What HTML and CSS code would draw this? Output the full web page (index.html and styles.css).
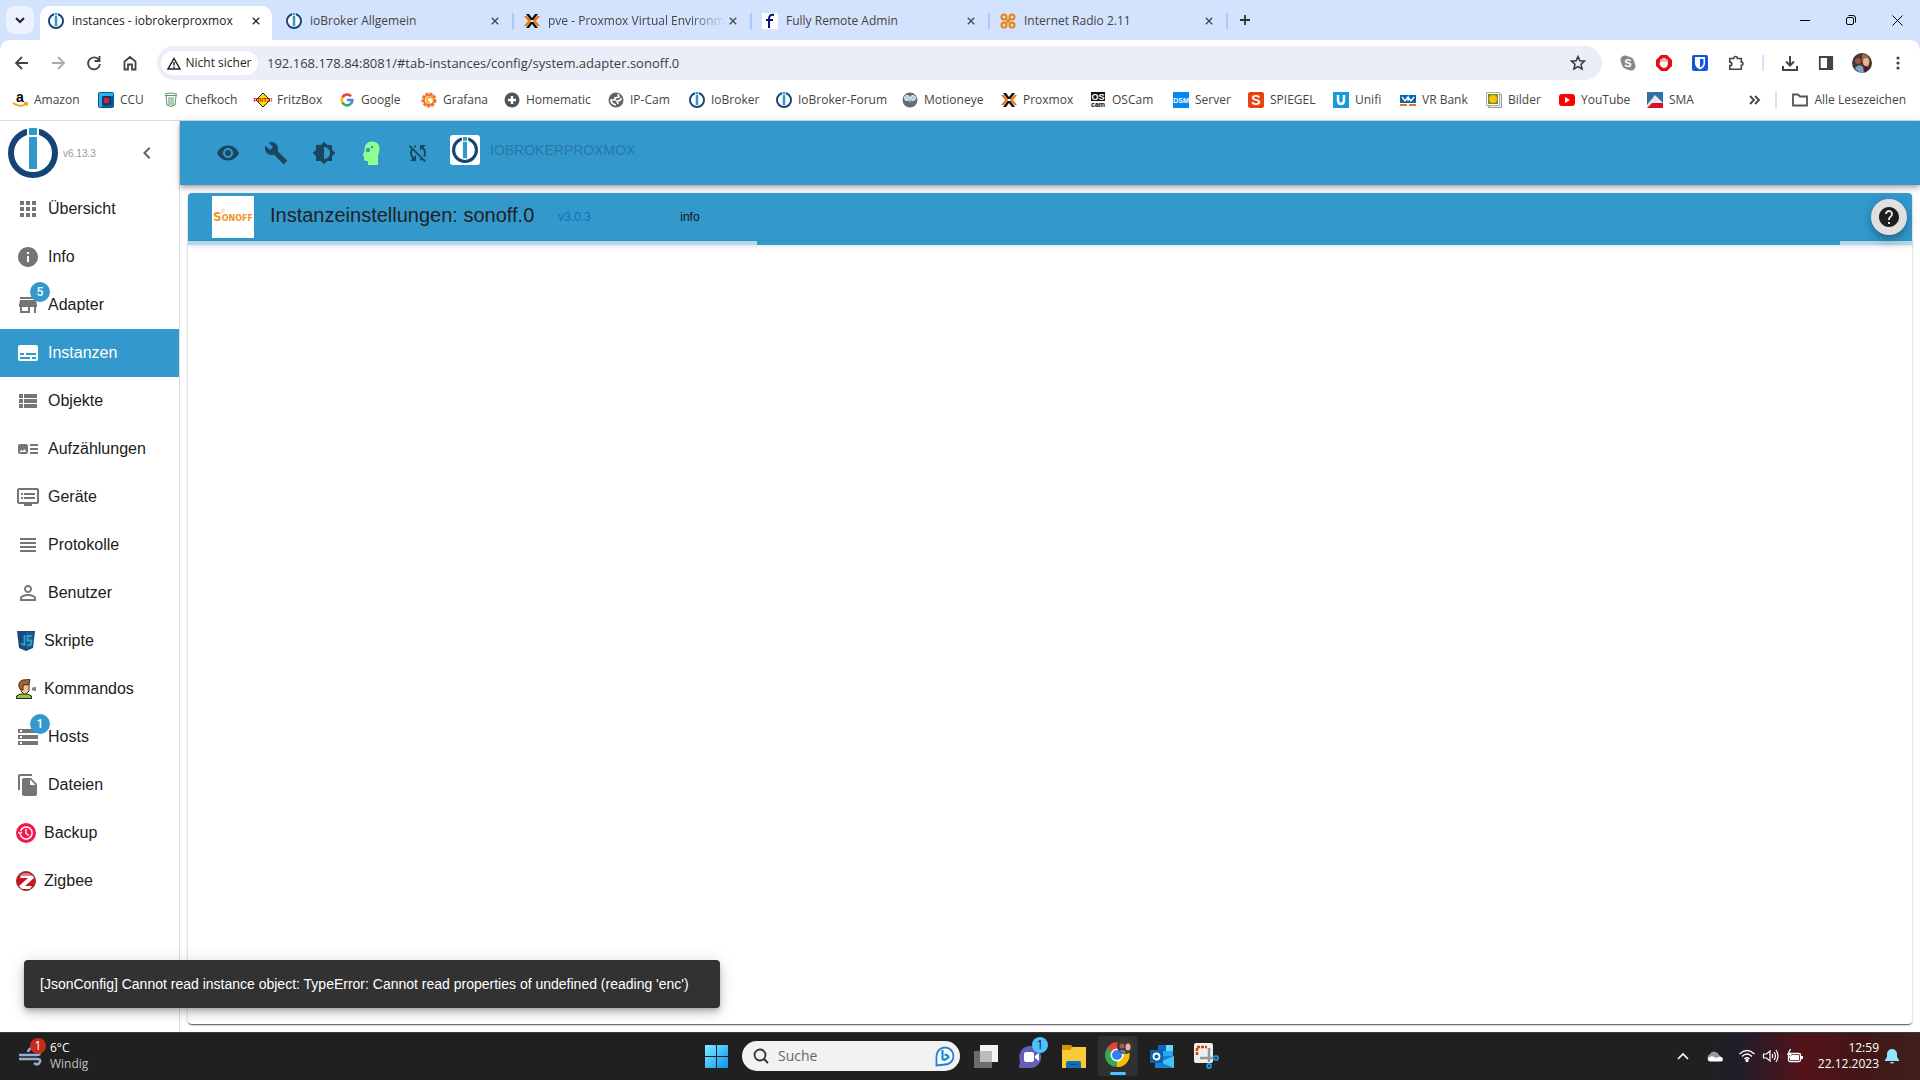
FILE: index.html
```html
<!DOCTYPE html>
<html lang="de">
<head>
<meta charset="utf-8">
<title>instances - iobrokerproxmox</title>
<link rel="stylesheet" href="styles.css">
</head>
<body>
<svg class="defs" aria-hidden="true">
  <symbol id="iob" viewBox="0 0 50 50"><circle cx="25" cy="25" r="22" fill="#fff" stroke="#164477" stroke-width="6"/><path d="M19 0h12v10H19z" fill="#fff"/><path d="M21 0h8v7h-8zM21 9h8v32h-8z" fill="#3399cc"/></symbol>
  <symbol id="prox" viewBox="0 0 16 16"><path d="M2 1h3l3 4 3-4h3l-4.500 6h-3zM2 15h3l3-4 3 4h3L9.500 9h-3z" fill="#111"/><path d="M0 3h3l4 5-4 5H0l4-5zM16 3h-3L9 8l4 5h3l-4-5z" fill="#ee7a0a"/></symbol>
  <symbol id="x" viewBox="0 0 10 10"><path d="M1 1l8 8M9 1L1 9" stroke="currentColor" stroke-width="1.600" fill="none"/></symbol>
</svg>

<header class="browser">
  <div class="tabs">
    <button class="tab-search" aria-label="Tabs durchsuchen"><svg width="10" height="10" viewBox="0 0 10 10"><path d="M1 3l4 4 4-4" fill="none" stroke="#222" stroke-width="2"/></svg></button>
    <div class="tab active"><svg class="fav"><use href="#iob"/></svg><span class="tab-title">instances - iobrokerproxmox</span><button class="close" aria-label="Schließen"><svg><use href="#x"/></svg></button></div>
    <div class="tab"><svg class="fav"><use href="#iob"/></svg><span class="tab-title">ioBroker Allgemein</span><button class="close" aria-label="Schließen"><svg><use href="#x"/></svg></button></div>
    <div class="tab"><svg class="fav"><use href="#prox"/></svg><span class="tab-title fade">pve - Proxmox Virtual Environm</span><button class="close" aria-label="Schließen"><svg><use href="#x"/></svg></button></div>
    <div class="tab"><svg class="fav" viewBox="0 0 16 16"><path d="M0 0h16v16H0z" fill="#fff"/><path d="M12 2q-5-1-5 4v9M4 7h7" fill="none" stroke="#100a80" stroke-width="2"/></svg><span class="tab-title">Fully Remote Admin</span><button class="close" aria-label="Schließen"><svg><use href="#x"/></svg></button></div>
    <div class="tab"><svg class="fav" viewBox="0 0 16 16" fill="none" stroke="#ee800f" stroke-width="2"><circle cx="4" cy="4" r="2.500"/><circle cx="12" cy="4" r="2.500"/><circle cx="4" cy="12" r="2.500"/><circle cx="12" cy="12" r="2.500"/><path d="M6 10l4-4M6 6l1 1M9 9l1 1"/></svg><span class="tab-title">Internet Radio 2.11</span><button class="close" aria-label="Schließen"><svg><use href="#x"/></svg></button></div>
    <button class="new-tab" aria-label="Neuer Tab"><svg width="12" height="12" viewBox="0 0 12 12"><path d="M6 1v10M1 6h10" stroke="#333" stroke-width="1.800"/></svg></button>
    <div class="window-buttons">
      <button aria-label="Minimieren"><svg width="10" height="10"><path d="M0 5.500h10" stroke="#000"/></svg></button>
      <button aria-label="Wiederherstellen"><svg width="10" height="10" fill="none" stroke="#000"><rect x=".5" y="2.500" width="7" height="7" rx="1.500"/><path d="M2.500 .5H7q2.500 0 2.500 2.500v4.500"/></svg></button>
      <button aria-label="Schließen"><svg width="11" height="11"><path d="M.5 .5l10 10M10.500 .5l-10 10" stroke="#000"/></svg></button>
    </div>
  </div>

  <div class="toolbar">
    <div class="nav-buttons">
      <button aria-label="Zurück"><svg viewBox="0 0 16 16"><path d="M8 2L2 8l6 6M2 8h12"/></svg></button>
      <button class="disabled" aria-label="Vor"><svg viewBox="0 0 16 16"><path d="M8 2l6 6-6 6M14 8H2"/></svg></button>
      <button aria-label="Neu laden"><svg viewBox="0 0 16 16"><path d="M13 5A6 6 0 1 0 14 9M13.500 1v5h-5"/></svg></button>
      <button aria-label="Startseite"><svg viewBox="0 0 16 16"><path d="M2.500 14.500V6.500L8 2l5.500 4.500v8H10v-5H6v5z"/></svg></button>
    </div>
    <div class="omnibox">
      <button class="insecure"><svg width="14" height="13" viewBox="0 0 14 13"><path d="M7 1.500L13 12H1zM7 5v3.500M7 9.500V11" fill="none" stroke="#222" stroke-width="1.500"/></svg>Nicht sicher</button>
      <input type="text" aria-label="Adresse" value="192.168.178.84:8081/#tab-instances/config/system.adapter.sonoff.0">
      <button aria-label="Lesezeichen"><svg width="16" height="16" viewBox="0 0 16 16"><path d="M8 1.500l1.900 4.300 4.600.4-3.500 3.100 1.100 4.600L8 11.500l-4.100 2.400L5 9.300 1.500 6.200l4.600-.4z" fill="none" stroke="#333" stroke-width="1.500"/></svg></button>
    </div>
    <div class="extensions">
      <button aria-label="Skype"><svg viewBox="0 0 16 16"><circle cx="5" cy="5" r="4.500" fill="#888"/><circle cx="11" cy="11" r="4.500" fill="#888"/><circle cx="8" cy="8" r="6.500" fill="#888"/><text x="8" y="12" text-anchor="middle" class="glyph white" font-size="11">S</text></svg></button>
      <button aria-label="AdBlock"><svg viewBox="0 0 16 16"><path d="M5 0h6l5 5v6l-5 5H5l-5-5V5z" fill="#e60c12"/><path d="M5 7V5M7 7V3.500M9 7V3.500M11 8V5" stroke="#fff" stroke-width="1.400" stroke-linecap="round"/><path d="M4.300 7h7.400v3q-1 3-3.700 3-2.500 0-4.700-4z" fill="#fff"/></svg></button>
      <button aria-label="Bitwarden"><svg viewBox="0 0 16 16"><rect width="16" height="16" rx="2" fill="#1358dc"/><path d="M3 2h10v7q-1 4-5 5.500Q4 13 3 9z" fill="#fff"/><path d="M8 4h3.500v5Q11 11 8 12.500z" fill="#1358dc"/></svg></button>
      <button aria-label="Erweiterungen"><svg viewBox="0 0 18 18"><path d="M2 4h4.500c0-3 4-3 4 0H15v4c2.500 0 2.500 3.500 0 3.500V16H2v-4c3 0 3-4 0-4z" fill="none" stroke="#444" stroke-width="1.800"/></svg></button>
      <i class="divider"></i>
      <button aria-label="Downloads"><svg viewBox="0 0 16 16"><path d="M8 1v9M4 6.500l4 4 4-4M1 11v4h14v-4" fill="none" stroke="#444" stroke-width="2"/></svg></button>
      <button aria-label="Seitenleiste"><svg viewBox="0 0 16 16"><path d="M1.800 2h12.400v12H1.800z" fill="none" stroke="#444" stroke-width="1.800"/><path d="M9 2h5.500v12H9z" fill="#444"/></svg></button>
      <button aria-label="Profil"><svg class="avatar" viewBox="0 0 20 20"><circle cx="10" cy="10" r="10" fill="#45382f"/><path d="M10 1q7 0 8 7l-2 7-6-6z" fill="#a66548"/><circle cx="6" cy="8" r="3" fill="#a05340"/><ellipse cx="14" cy="9" rx="3" ry="4" fill="#e8b39b"/><path d="M3 15q4-5 8-1l1 6q-6 0-9-5" fill="#7fa3c4"/><path d="M12 14l6 0-5 6z" fill="#4b1828"/></svg></button>
      <button aria-label="Menü"><svg viewBox="0 0 16 16" fill="#444"><circle cx="8" cy="3" r="1.600"/><circle cx="8" cy="8" r="1.600"/><circle cx="8" cy="13" r="1.600"/></svg></button>
    </div>
  </div>

  <nav class="bookmarks">
    <div class="bookmark-list">
      <a href="#"><svg viewBox="0 0 16 16"><text x="8" y="10" text-anchor="middle" class="glyph" font-size="14">a</text><path d="M1 11q7 5 13 1M12 11h3v3" fill="none" stroke="#f6a21c" stroke-width="1.800"/></svg>Amazon</a>
      <a href="#"><svg viewBox="0 0 16 16"><rect width="16" height="16" rx="2" fill="#075b96"/><path d="M1 1h14v3H4v11H1z" fill="#22b5e5"/><rect x="4" y="4" width="9" height="9" rx="2" fill="#0c3766"/><circle cx="8.500" cy="8.500" r="3" fill="#d0203d"/></svg>CCU</a>
      <a href="#"><svg viewBox="0 0 16 16" fill="none" stroke="#5b9468"><path d="M2 3.500h12M3 4l1 9q4 3 8 0l1-9M6 5v8M8 5v8M10 5v8M2 2q6-2 12 0"/></svg>Chefkoch</a>
      <a href="#"><svg viewBox="0 0 16 16"><path d="M8 1l7 7-7 7-7-7z" fill="#ffdf00" stroke="#222"/><text x="8" y="10" text-anchor="middle" class="glyph" font-size="6" fill="#d00a12">FRITZ!</text></svg>FritzBox</a>
      <a href="#"><svg viewBox="0 0 16 16" fill="none" stroke-width="2.600"><path d="M12 4.300A5.300 5.300 0 0 0 3.400 5.400" stroke="#ea4335"/><path d="M3.400 5.400a5.300 5.300 0 0 0 0 5.200" stroke="#fbbc05"/><path d="M3.400 10.600a5.300 5.300 0 0 0 8.100 1.500" stroke="#34a853"/><path d="M11.500 12.100A5.300 5.300 0 0 0 13.300 8H8" stroke="#4285f4"/></svg>Google</a>
      <a href="#"><svg viewBox="0 0 16 16" fill="none" stroke="#f2742b"><circle cx="8" cy="8" r="6" stroke-width="3" stroke-dasharray="3 1"/><circle cx="8" cy="8" r="5" stroke-width="2"/><path d="M12 8a3 3 0 1 0-3 3" stroke="#f8ab32" stroke-width="2"/></svg>Grafana</a>
      <a href="#"><svg viewBox="0 0 16 16"><circle cx="8" cy="8" r="7.500" fill="#505357"/><path d="M8 4v8M4 8h8" stroke="#fff" stroke-width="2.400"/></svg>Homematic</a>
      <a href="#"><svg viewBox="0 0 16 16"><circle cx="8" cy="8" r="7.500" fill="#5f6368"/><path d="M10 2l1 3-4 1v2H3q0 4 5 5M13 6q0 3-4 3l1 3" fill="none" stroke="#fff" stroke-width="1.700"/></svg>IP-Cam</a>
      <a href="#"><svg><use href="#iob"/></svg>IoBroker</a>
      <a href="#"><svg><use href="#iob"/></svg>IoBroker-Forum</a>
      <a href="#"><svg viewBox="0 0 16 16"><circle cx="8" cy="8" r="7.500" fill="#666c72"/><circle cx="5" cy="6" r="2.500" fill="#9ed6ed" stroke="#eee"/><circle cx="11" cy="6" r="2.500" fill="#9ed6ed" stroke="#eee"/><path d="M7 8h2l-1 3z" fill="#ddd"/></svg>Motioneye</a>
      <a href="#"><svg><use href="#prox"/></svg>Proxmox</a>
      <a href="#"><svg viewBox="0 0 16 16"><path d="M1 0h14v9H1z" fill="#111"/><text x="8" y="8" text-anchor="middle" class="glyph white" font-size="9">OS</text><text x="8" y="15" text-anchor="middle" class="glyph" font-size="7">cam</text></svg>OSCam</a>
      <a href="#"><svg viewBox="0 0 16 16"><path d="M0 0h16v16H0z" fill="#0787ea"/><text x="8" y="11" text-anchor="middle" class="glyph white" font-size="7">DSM</text></svg>Server</a>
      <a href="#"><svg viewBox="0 0 16 16"><rect width="16" height="16" rx="2" fill="#e64415"/><text x="8" y="13" text-anchor="middle" class="glyph white" font-size="14">S</text></svg>SPIEGEL</a>
      <a href="#"><svg viewBox="0 0 16 16"><path d="M0 0h16v16H0z" fill="#159bd8"/><path d="M5 3v5q0 4 3 4t3-4V3" fill="none" stroke="#fff" stroke-width="2.500"/></svg>Unifi</a>
      <a href="#"><svg viewBox="0 0 16 16"><path d="M0 3h16v8H0z" fill="#0867ae"/><path d="M2 5l3 4 3-4v4M8 5l3 4 3-4" fill="none" stroke="#fff" stroke-width="1.300"/><path d="M0 12h7v2H0zM9 12h7v2H9z" fill="#f07115"/></svg>VR Bank</a>
      <a href="#"><svg viewBox="0 0 16 16"><path d="M2.500 2.500h13v13h-13z" fill="#eee" stroke="#999"/><path d="M.5 .5h13v13H.5z" fill="#fff" stroke="#aaa"/><path d="M2 2h10v10H2z" fill="#7c8a20"/><circle cx="7" cy="7" r="4" fill="#f4c20c"/></svg>Bilder</a>
      <a href="#"><svg viewBox="0 0 16 16"><rect y="2" width="16" height="12" rx="3" fill="#f00"/><path d="M6 5l5 3-5 3z" fill="#fff"/></svg>YouTube</a>
      <a href="#"><svg viewBox="0 0 16 16"><path d="M0 0h16v16H0z" fill="#2d73a8"/><path d="M0 13l8-10 8 8v5H0z" fill="#e5e8ee"/><path d="M0 16l5-5 11 0v5z" fill="#d01426"/></svg>SMA</a>
    </div>
    <div class="bookmark-end">
      <button aria-label="Weitere Lesezeichen"><svg width="11" height="10" viewBox="0 0 11 10"><path d="M1 1l4 4-4 4M6 1l4 4-4 4" fill="none" stroke="#444" stroke-width="1.800"/></svg></button>
      <i class="divider"></i>
      <a href="#"><svg viewBox="0 0 16 16"><path d="M1 2.500h5l2 2h7v9H1z" fill="none" stroke="#555" stroke-width="1.800"/></svg>Alle Lesezeichen</a>
    </div>
  </nav>
</header>

<div class="app">
  <aside class="sidebar">
    <div class="brand"><svg class="brand-logo"><use href="#iob"/></svg><span>v6.13.3</span><button aria-label="Menü einklappen"><svg class="mi" viewBox="0 0 24 24"><path d="M15.410 7.410L14 6l-6 6 6 6 1.410-1.410L10.830 12z"/></svg></button></div>
    <nav class="menu">
      <a href="#"><span class="ico"><svg class="mi" viewBox="0 0 24 24"><path d="M4 8h4V4H4v4zm6 12h4v-4h-4v4zm-6 0h4v-4H4v4zm0-6h4v-4H4v4zm6 0h4v-4h-4v4zm6-10v4h4V4h-4zm-6 4h4V4h-4v4zm6 6h4v-4h-4v4zm0 6h4v-4h-4v4z"/></svg></span>Übersicht</a>
      <a href="#"><span class="ico"><svg class="mi" viewBox="0 0 24 24"><path d="M12 2C6.480 2 2 6.480 2 12s4.480 10 10 10 10-4.480 10-10S17.520 2 12 2zm1 15h-2v-6h2v6zm0-8h-2V7h2v2z"/></svg></span>Info</a>
      <a href="#"><span class="ico"><svg class="mi" viewBox="0 0 24 24"><path d="M20 4H4v2h16V4zm1 10v-2l-1-5H4l-1 5v2h1v6h10v-6h4v6h2v-6h1zm-9 4H6v-4h6v4z"/></svg><b class="badge">5</b></span>Adapter</a>
      <a href="#" class="selected"><span class="ico"><svg class="mi" viewBox="0 0 24 24"><path d="M20 4H4c-1.100 0-2 .9-2 2v12c0 1.100.9 2 2 2h16c1.100 0 2-.9 2-2V6c0-1.100-.9-2-2-2zM4 12h4v2H4v-2zm10 6H4v-2h10v2zm6 0h-4v-2h4v2zm0-4H10v-2h10v2z"/></svg></span>Instanzen</a>
      <a href="#"><span class="ico"><svg class="mi" viewBox="0 0 24 24"><path d="M3 14h4v-4H3v4zm0 5h4v-4H3v4zM3 9h4V5H3v4zm5 5h13v-4H8v4zm0 5h13v-4H8v4zM8 5v4h13V5H8z"/></svg></span>Objekte</a>
      <a href="#"><span class="ico"><svg class="mi" viewBox="0 0 24 24"><path d="M22 13h-8v-2h8v2zm0-6h-8v2h8V7zm-8 10h8v-2h-8v2zm-2-8v6c0 1.100-.9 2-2 2H4c-1.100 0-2-.9-2-2V9c0-1.100.9-2 2-2h6c1.100 0 2 .9 2 2zm-1.500 6l-2.250-3-1.750 2.260-1.250-1.510L3.500 15h7z"/></svg></span>Aufzählungen</a>
      <a href="#"><span class="ico"><svg class="mi" viewBox="0 0 24 24"><path d="M21 3H3c-1.100 0-2 .9-2 2v12c0 1.100.9 2 2 2h5v2h8v-2h5c1.100 0 2-.9 2-2V5c0-1.100-.9-2-2-2zm0 14H3V5h18v12zm-2-9H8v2h11V8zm0 4H8v2h11v-2zM7 8H5v2h2V8zm0 4H5v2h2v-2z"/></svg></span>Geräte</a>
      <a href="#"><span class="ico"><svg class="mi" viewBox="0 0 24 24"><path d="M4 15h16v-2H4v2zm0 4h16v-2H4v2zm0-8h16V9H4v2zm0-6v2h16V5H4z"/></svg></span>Protokolle</a>
      <a href="#"><span class="ico"><svg class="mi" viewBox="0 0 24 24"><path d="M12 5.900c1.160 0 2.100.94 2.100 2.100s-.94 2.100-2.100 2.100S9.900 9.160 9.900 8s.94-2.100 2.100-2.100m0 9c2.970 0 6.100 1.460 6.100 2.100v1.100H5.900V17c0-.64 3.130-2.100 6.100-2.100M12 4C9.790 4 8 5.790 8 8s1.790 4 4 4 4-1.790 4-4-1.790-4-4-4zm0 9c-2.670 0-8 1.340-8 4v3h16v-3c0-2.660-5.330-4-8-4z"/></svg></span>Benutzer</a>
      <a href="#" class="plugin"><svg viewBox="0 0 20 20"><path d="M1 0h18l-2 17-7 3-7-3z" fill="#184a7c"/><path d="M10 1h7.500L16 16l-6 2z" fill="#1c5a90"/><path d="M8.500 4v10l-3.500-1.500M15.500 5h-4v4.500h4l-.5 4-3.500 1" fill="none" stroke="#35a0d5" stroke-width="1.800"/></svg>Skripte</a>
      <a href="#" class="plugin"><svg viewBox="0 0 20 20"><path d="M.5 19.500V17l4-2h7l4 2v2.500z" fill="#93c83e" stroke="#222"/><path d="M5 5h8v7l-3 3H8l-3-3z" fill="#f3c398" stroke="#4a2d1c"/><path d="M3 8q-1-6 4-7l7-.5-1 5-6 .5v5l-3-1z" fill="#a66432" stroke="#4a2d1c"/><path d="M17 8.500v3M19 8v4" fill="none" stroke="#333" stroke-width="1.200"/></svg>Kommandos</a>
      <a href="#"><span class="ico"><svg class="mi" viewBox="0 0 24 24"><path d="M2 20h20v-4H2v4zm2-3h2v2H4v-2zM2 4v4h20V4H2zm4 3H4V5h2v2zm-4 7h20v-4H2v4zm2-3h2v2H4v-2z"/></svg><b class="badge">1</b></span>Hosts</a>
      <a href="#"><span class="ico"><svg class="mi" viewBox="0 0 24 24"><path d="M16 1H4c-1.100 0-2 .9-2 2v14h2V3h12V1zm-1 4l6 6v10c0 1.100-.9 2-2 2H8c-1.100 0-2-.9-2-2V7c0-1.100.9-2 2-2h7zm-1 7h5.500L14 6.500V12z"/></svg></span>Dateien</a>
      <a href="#" class="plugin"><svg viewBox="0 0 20 20"><circle cx="10" cy="10" r="10" fill="#f5164b"/><path d="M4.500 12a6 6 0 1 0 0-4M10 6v4.500l3 2M2.500 9l1.500 2 2-2" fill="none" stroke="#fff" stroke-width="1.400"/></svg>Backup</a>
      <a href="#" class="plugin"><svg viewBox="0 0 20 20"><circle cx="10" cy="10" r="9.500" fill="#c81420" stroke="#8c3434"/><path d="M3 5q7-6 14 0z" fill="#d98b88"/><path d="M5 5h12l1 2-9 8h7l-2 3H6l-3-3 9-8H4z" fill="#fff"/></svg>Zigbee</a>
    </nav>
  </aside>

  <main class="main">
    <div class="appbar">
      <button aria-label="Sichtbarkeit"><svg class="mi" viewBox="0 0 24 24"><path d="M12 4.500C7 4.500 2.730 7.610 1 12c1.730 4.390 6 7.500 11 7.500s9.270-3.110 11-7.500c-1.730-4.390-6-7.500-11-7.500zM12 17c-2.760 0-5-2.240-5-5s2.240-5 5-5 5 2.240 5 5-2.240 5-5 5zm0-8c-1.660 0-3 1.340-3 3s1.340 3 3 3 3-1.340 3-3-1.340-3-3-3z"/></svg></button>
      <button aria-label="Einstellungen"><svg class="mi" viewBox="0 0 24 24"><path d="M22.700 19l-9.100-9.100c.9-2.300.4-5-1.500-6.900-2-2-5-2.400-7.400-1.300L9 6 6 9 1.600 4.700C.4 7.100.9 10.100 2.900 12.100c1.900 1.900 4.600 2.400 6.900 1.500l9.100 9.100c.4.4 1 .4 1.400 0l2.300-2.300c.5-.4.5-1.100.1-1.400z"/></svg></button>
      <button aria-label="Farbschema"><svg class="mi" viewBox="0 0 24 24"><path d="M20 15.310L23.310 12 20 8.690V4h-4.690L12 .69 8.690 4H4v4.690L.69 12 4 15.310V20h4.690L12 23.310 15.310 20H20v-4.690zM12 18V6c3.310 0 6 2.690 6 6s-2.690 6-6 6z"/></svg></button>
      <button class="expert" aria-label="Expertenmodus"><svg class="mi" viewBox="0 0 24 24"><path d="M13 .5c5 0 7.500 3 7.500 7 0 3-1 5-1.500 7V24H9v-4H7c-2 0-2-1-2-3v-2H3.500l2-5C5.500 4 8 .5 13 .5z"/><g fill="#3399cc"><circle cx="9" cy="9" r="2.200"/><circle cx="13" cy="6" r="1.300"/></g></svg></button>
      <button aria-label="Synchronisierung aus"><svg class="mi" viewBox="0 0 24 24"><path d="M10 6.350V4.260c-.8.21-1.550.54-2.230.96l1.460 1.460c.25-.12.5-.24.77-.33zm-7.140-.94l2.360 2.360C4.450 8.990 4 10.440 4 12c0 2.210.91 4.200 2.360 5.640L4 20h6v-6l-2.240 2.240C6.680 15.150 6 13.660 6 12c0-1 .25-1.940.68-2.770l8.080 8.080c-.25.13-.5.25-.77.34v2.090c.8-.21 1.550-.54 2.230-.96l2.360 2.360 1.270-1.270L4.140 4.140 2.860 5.410zM20 4h-6v6l2.240-2.240C17.320 8.850 18 10.340 18 12c0 1-.25 1.940-.68 2.770l1.460 1.460C19.550 15.010 20 13.560 20 12c0-2.210-.91-4.200-2.360-5.640L20 4z"/></svg></button>
      <button class="host"><span class="host-logo"><svg><use href="#iob"/></svg></span>IOBROKERPROXMOX</button>
    </div>

    <section class="panel">
      <header class="panel-head">
        <div class="sonoff"><svg width="42" height="42" viewBox="0 0 42 42"><text x="21" y="25" text-anchor="middle" class="glyph wide" font-size="12" fill="#f39325">S<tspan font-size="8">ONOFF</tspan></text><path d="M9 15a2 2 0 0 1 2 2M10 13q2 0 2 2" fill="none" stroke="#f7c691"/></svg></div>
        <h1>Instanzeinstellungen: sonoff.0</h1>
        <span class="version">v3.0.3</span>
        <span class="level">info</span>
        <button class="help" aria-label="Hilfe"><svg class="mi" viewBox="0 0 24 24"><path d="M12 2C6.480 2 2 6.480 2 12s4.480 10 10 10 10-4.480 10-10S17.520 2 12 2zm1 17h-2v-2h2v2zm2.070-7.750l-.9.920C13.450 12.900 13 13.500 13 15h-2v-.5c0-1.100.45-2.100 1.170-2.830l1.240-1.260c.37-.36.59-.86.59-1.410 0-1.100-.9-2-2-2s-2 .9-2 2H8c0-2.210 1.790-4 4-4s4 1.790 4 4c0 .88-.36 1.680-.93 2.250z"/></svg></button>
      </header>
      <div class="progress"></div>
    </section>
  </main>
  <div class="snackbar" role="alert">[JsonConfig] Cannot read instance object: TypeError: Cannot read properties of undefined (reading 'enc')</div>
</div>

<footer class="taskbar">
  <button class="weather">
    <span class="weather-icon"><svg width="24" height="20" viewBox="0 0 24 20"><path d="M10 6q1-4 5-4t5 5M1 9h18q3 0 3-3M1 13h18q4 0 3 3-2 4-6 1" fill="none" stroke="#93add3" stroke-width="2.500"/></svg><b class="alert">1</b></span>
    <span class="weather-text"><span>6°C</span><span class="dim">Windig</span></span>
  </button>
  <div class="apps">
    <button aria-label="Start"><svg width="24" height="24" viewBox="0 0 24 24"><defs><linearGradient id="w" x2="1" y2="1"><stop stop-color="#7df0ff"/><stop offset="1" stop-color="#0890f5"/></linearGradient></defs><path d="M1 1h11v11H1zM13 1h11v11H13zM1 13h11v11H1zM13 13h11v11H13z" fill="url(#w)"/></svg></button>
    <label class="search"><svg width="16" height="16" viewBox="0 0 16 16"><circle cx="7" cy="7" r="5.500" fill="none" stroke="#333" stroke-width="1.800"/><path d="M11 11l4 4" stroke="#333" stroke-width="2"/></svg><input type="text" aria-label="Suche" placeholder="Suche"><svg width="20" height="22" viewBox="0 0 20 22"><path d="M1.500 20.500V11A8.500 8.500 0 1 1 10 19.500z" fill="#fff" stroke="#237fd5" stroke-width="1.800"/><path d="M7.500 5v9l2 1 4-2.500q0-2.500-4-3" fill="none" stroke="#168cde" stroke-width="2.200"/></svg></label>
    <button aria-label="Taskansicht"><svg width="24" height="24" viewBox="0 0 24 24"><path d="M6 1h18v17H6z" fill="#f3f3f3"/><path d="M0 7h18v17H0z" fill="#858585" opacity=".75"/><path d="M6 7h12v11H6z" fill="#bbb"/></svg></button>
    <button aria-label="Chat"><svg width="24" height="24" viewBox="0 0 24 24"><path d="M1 24l1-7A11 11 0 1 1 12 24z" fill="#6460ba"/><rect x="6" y="8" width="10" height="10" rx="2" fill="#fff"/><path d="M17 12l4-3v8l-4-3z" fill="#fff"/></svg><b class="chat-badge">1</b></button>
    <button aria-label="Explorer"><svg width="24" height="24" viewBox="0 0 24 24"><path d="M0 1h9l3 3h10v6H0z" fill="#d7930a"/><path d="M0 6h8l3-3h13v21H0z" fill="#fbca3a"/><path d="M4 24v-5q0-2 2-2h11q2 0 2 2v5z" fill="#1070ba"/><path d="M8 20h7v1H8z" fill="#0b467a"/></svg></button>
    <button class="running" aria-label="Chrome"><svg width="28" height="30" viewBox="0 0 28 30"><circle cx="12" cy="17" r="12" fill="#34a853"/><path d="M12 17L2 10A12 12 0 0 1 23 11z" fill="#ea4335"/><path d="M12 17l11-6A12 12 0 0 1 12 29z" fill="#fbbc05"/><circle cx="12" cy="17" r="6.500" fill="#fff"/><circle cx="12" cy="17" r="5" fill="#3580ef"/><circle cx="20" cy="8" r="8" fill="#403632"/><circle cx="17" cy="8" r="2.500" fill="#9f6550"/><ellipse cx="23" cy="9" rx="2.500" ry="3.500" fill="#e8b39b"/><path d="M14 13q4-3 7 1l-1 2z" fill="#5b82a5"/></svg></button>
    <button aria-label="Outlook"><svg width="24" height="24" viewBox="0 0 24 24"><path d="M8 1h15v12H8z" fill="#2ba7eb"/><path d="M8 1h8v6H8z" fill="#0b66b8"/><path d="M16 1h7v6h-7z" fill="#63d7ff"/><path d="M5 12l19 0v12H5z" fill="#1683d3"/><path d="M24 12v12L10 18z" fill="#46c2f5"/><rect y="6" width="13" height="13" rx="1" fill="#0a63ad"/><circle cx="6.500" cy="12.500" r="3" fill="none" stroke="#fff" stroke-width="1.800"/></svg></button>
    <button aria-label="Snipping Tool"><svg width="26" height="26" viewBox="0 0 26 26"><rect x="1" y="0" width="19" height="20" rx="2" fill="#eee"/><path d="M4 12V4h10" fill="none" stroke="#da3b16" stroke-width="2.500" stroke-dasharray="3 1"/><path d="M7 15h13M16 5v14" stroke="#9297a0" stroke-width="2.500"/><g fill="none" stroke="#2090d5" stroke-width="2"><circle cx="23" cy="15" r="2"/><circle cx="16" cy="23" r="2"/></g></svg></button>
  </div>
  <div class="tray">
    <button aria-label="Ausgeblendete Symbole"><svg width="12" height="8" viewBox="0 0 12 8"><path d="M1 7l5-5 5 5" fill="none" stroke="#fff" stroke-width="1.600"/></svg></button>
    <button class="cloud" aria-label="OneDrive"><svg width="16" height="12" viewBox="0 0 16 12"><path d="M1 9a4 4 0 0 1 2-5 5 5 0 0 1 9 1l3 3z" fill="#999"/><path d="M3 11.500q-3-1-2-3.500l4-2 4 2q6-3 7 1 0 2.500-2 2.500z" fill="#fff"/></svg></button>
    <button class="status" aria-label="Netzwerk, Ton und Akku">
      <svg width="16" height="14" viewBox="0 0 16 14" fill="none" stroke="#fff" stroke-width="1.300"><path d="M.5 5q7.500-7 15 0M3 7.500q5-5 10 0M5.500 10q2.500-2.500 5 0"/><circle cx="8" cy="11.500" r="1"/></svg>
      <svg width="16" height="14" viewBox="0 0 16 14" fill="none" stroke="#fff" stroke-width="1.200"><path d="M.5 5v4h3L7 12V2L3.500 5zM9 5q1.500 2 0 4M11 3q3 4 0 8M13 1q4 6 0 12"/></svg>
      <svg width="16" height="14" viewBox="0 0 16 14"><rect x="1.500" y="4.500" width="12" height="8" rx="1.500" fill="none" stroke="#fff" stroke-width="1.300"/><path d="M5 6h7v5H3V8zM14 7h2v3h-2z" fill="#fff"/><path d="M3.500 0L1 5h3L2.500 9" fill="none" stroke="#fff" stroke-width="1.300"/></svg>
    </button>
    <button class="clock"><span>12:59</span><span>22.12.2023</span></button>
    <button aria-label="Benachrichtigungen"><svg width="14" height="16" viewBox="0 0 14 16"><path d="M0 12l2-3V6a5 5 0 0 1 10 0v3l2 3v1H0zM5 14h4q0 1.500-2 1.500T5 14" fill="#92e6fd"/></svg></button>
  </div>
</footer>
</body>
</html>
```
FILE: styles.css
```css
* { box-sizing: border-box; }

body {
  margin: 0;
  min-height: 100vh;
  display: flex;
  flex-direction: column;
  font-family: "Liberation Sans", Arial, sans-serif;
  color: #212121;
  background: #fff;
}

button {
  display: flex;
  align-items: center;
  justify-content: center;
  padding: 0;
  border: 0;
  background: none;
  color: inherit;
  font: inherit;
}

input { min-width: 0; border: 0; padding: 0; background: none; font: inherit; color: inherit; outline: 0; }
a { color: inherit; text-decoration: none; }
svg { display: block; flex: none; overflow: visible; }
.defs { position: absolute; width: 0; height: 0; }
.glyph { font-family: "Liberation Sans", Arial, sans-serif; font-weight: bold; }
.wide { font-family: "DejaVu Sans", sans-serif; }
.white { fill: #fff; }
.mi { width: 24px; height: 24px; fill: currentColor; }

/* Browser window */
.browser { font: 12px/16px "Open Sans", "Noto Sans", sans-serif; color: #444; background: #d3e2fd; }

.tabs { display: flex; height: 40px; padding: 6px 0 0 6px; }
.tab-search { width: 28px; height: 28px; margin-right: 6px; border-radius: 8px; background: #ebf1fe; }
.tab {
  display: flex;
  align-items: center;
  flex: 0 1 238px;
  min-width: 0;
  height: 16px;
  margin-top: 7px;
  padding: 0 10px;
  border-right: 2px solid #a8c7fa;
}
.tab.active {
  flex-basis: 232px;
  height: 34px;
  margin: 0 6px 0 0;
  padding: 0 9px 4px 8px;
  border: 0;
  border-radius: 10px 10px 0 0;
  background: #fff;
  color: #222;
}
.tab.active + .tab { padding-left: 8px; flex-basis: 236px; }
.fav { width: 16px; height: 16px; }
.tab-title { flex: 1; min-width: 0; margin: 0 0 0 8px; white-space: nowrap; }
.fade { -webkit-mask-image: linear-gradient(90deg, #000 80%, transparent); mask-image: linear-gradient(90deg, #000 80%, transparent); }
.close { width: 14px; height: 14px; }
.close svg { width: 8px; height: 8px; }
.new-tab { width: 34px; height: 28px; }
.window-buttons { display: flex; margin-left: auto; }
.window-buttons button { width: 46px; height: 28px; }

.toolbar { display: flex; align-items: center; height: 46px; padding: 0 4px; border-radius: 10px 10px 0 0; background: #fff; }
.nav-buttons { display: flex; width: 153px; }
.nav-buttons button { width: 36px; height: 34px; }
.nav-buttons svg { width: 16px; height: 16px; fill: none; stroke: #444; stroke-width: 1.8; }
.nav-buttons .disabled { opacity: 0.45; }
.omnibox { flex: 1; display: flex; align-items: center; height: 34px; padding: 0 16px 0 4px; border-radius: 17px; background: #ebeef8; }
.omnibox input { flex: 1; margin: 0 9px; font-size: 13px; color: #3c3c40; }
.insecure { gap: 4px; width: 97px; height: 24px; border-radius: 12px; background: #fff; color: #222; }
.extensions { display: flex; align-items: center; margin-left: 8px; }
.extensions button { width: 36px; height: 34px; }
.extensions svg { width: 16px; height: 16px; }
.extensions .avatar { width: 20px; height: 20px; }
.divider { width: 2px; height: 16px; background: #d3e2fd; }
.extensions .divider { margin: 0 8px; }

.bookmarks { display: flex; justify-content: space-between; height: 35px; padding: 0 14px 7px 12px; border-bottom: 1px solid #dcdcdc; background: #fff; white-space: nowrap; }
.bookmark-list { display: grid; grid-template-columns: 86px 65px 92px 84px 82px 83px 104px 81px 87px 126px 99px 89px 83px 75px 85px 67px 86px 73px 88px 70px; }
.bookmarks a { display: flex; align-items: center; gap: 6px; }
.bookmarks a svg { width: 16px; height: 16px; }
.bookmark-end { display: flex; align-items: center; gap: 15px; }

/* ioBroker admin */
.app { position: relative; flex: 1; display: grid; grid-template-columns: 180px minmax(0, 1fr); }
.sidebar { border-right: 1px solid #dcdcdc; }
.brand { display: flex; align-items: center; height: 64px; padding-left: 8px; color: #999; font-size: 10px; }
.brand-logo { width: 50px; height: 50px; margin-right: 5px; }
.brand button { width: 24px; height: 24px; margin: 0 20px 0 auto; color: #666; }
.menu a { display: flex; align-items: center; gap: 8px; height: 48px; padding-left: 16px; font-size: 16px; }
.menu .plugin svg { width: 20px; height: 20px; }
.ico { position: relative; color: #757575; }
.menu .selected, .selected .ico { background: #3399cc; color: #fff; }
.badge {
  position: absolute;
  top: -11px;
  right: -10px;
  width: 20px;
  height: 20px;
  border-radius: 50%;
  background: #3399cc;
  color: #fff;
  font: 500 12px/20px Roboto, sans-serif;
  text-align: center;
}

.main { display: flex; flex-direction: column; min-width: 0; }
.appbar {
  display: flex;
  align-items: center;
  height: 64px;
  padding-left: 24px;
  background: #3399cc;
  box-shadow: 0 2px 4px -1px rgba(0, 0, 0, 0.2), 0 4px 5px rgba(0, 0, 0, 0.14), 0 1px 10px rgba(0, 0, 0, 0.12);
}
.appbar button { width: 48px; height: 48px; color: #19475f; }
.appbar .expert { width: 46px; color: #90ff90; }
.appbar .host { align-self: flex-start; width: auto; height: 58px; margin-left: 8px; gap: 10px; font-size: 14px; color: #267aa6; }
.host-logo { padding: 2px; border-radius: 3px; background: #fff; }
.host-logo svg { width: 26px; height: 26px; }

.panel {
  flex: 1;
  margin: 8px;
  border-radius: 4px;
  box-shadow: 0 2px 1px -1px rgba(0, 0, 0, 0.4), 0 1px 1px rgba(0, 0, 0, 0.24), 0 1px 3px rgba(0, 0, 0, 0.2);
}
.panel-head { display: flex; align-items: center; height: 48px; padding: 0 5px 0 24px; border-radius: 4px 4px 0 0; background: #3399cc; }
.sonoff { width: 42px; height: 42px; margin-right: 16px; background: #fff; }
.panel h1 { margin: 0; font-size: 20px; line-height: 28px; font-weight: normal; padding-bottom: 4px; }
.version { margin-left: 24px; width: 122px; font-size: 12px; color: #1270b8; }
.level { font-size: 12px; color: #111; }
.help {
  z-index: 1;
  width: 36px;
  height: 36px;
  margin-left: auto;
  border-radius: 50%;
  background: #e0e0e0;
  color: #1e1e1e;
  box-shadow: 0 3px 5px -1px rgba(0, 0, 0, 0.2), 0 6px 10px rgba(0, 0, 0, 0.14), 0 1px 18px rgba(0, 0, 0, 0.12);
}
.progress { height: 4px; background: linear-gradient(90deg, #b2d8eb 33%, #3399cc 33%, #3399cc 95.8%, #b2d8eb 95.8%); box-shadow: 0 1px 4px rgba(0, 0, 0, 0.15); }

.snackbar {
  position: absolute;
  left: 24px;
  bottom: 24px;
  min-width: 696px;
  padding: 14px 16px;
  border-radius: 4px;
  background: #323232;
  color: #fff;
  font-size: 14px;
  line-height: 20px;
  box-shadow: 0 3px 5px -1px rgba(0, 0, 0, 0.2), 0 6px 10px rgba(0, 0, 0, 0.14), 0 1px 18px rgba(0, 0, 0, 0.12);
}

/* Windows taskbar */
.taskbar {
  display: grid;
  grid-template-columns: 1fr auto 1fr;
  height: 48px;
  padding-bottom: 1px;
  box-shadow: inset 0 1px #3a3a3a;
  background: linear-gradient(90deg, #202020 0, #202020 calc(100% - 210px), #211d2a calc(100% - 180px), #551318 calc(100% - 115px), #421716 calc(100% - 60px), #40201a 100%);
  color: #fff;
  font: 12px/16px "Open Sans", "Noto Sans", sans-serif;
}
.weather { justify-self: start; gap: 8px; padding-left: 18px; text-align: left; }
.weather-icon { position: relative; }
.weather-text, .clock { display: flex; flex-direction: column; }
.dim { color: #c0c0c0; }
.alert { position: absolute; top: -8px; right: -4px; width: 16px; height: 16px; border-radius: 50%; background: #c42b1c; font-weight: normal; text-align: center; }
.apps { display: flex; align-items: center; padding-left: 2px; }
.apps button { position: relative; width: 44px; height: 40px; }
.search { display: flex; align-items: center; gap: 9px; width: 218px; height: 30px; margin: 0 4px; padding: 0 5px 0 11px; border-radius: 15px; background: #f2f2f2; }
.search input { flex: 1; font-size: 14px; }
.search input::placeholder { color: #666; opacity: 1; }
.chat-badge { position: absolute; top: 1px; right: 4px; width: 16px; height: 16px; border-radius: 50%; background: #4cc2ff; color: #123; font-weight: normal; text-align: center; }
.apps .running { width: 40px; margin: 0 2px; padding: 0 0 5px 2px; border-radius: 4px; background: #303030; }
.running::after { content: ""; position: absolute; bottom: 1px; left: 12px; width: 16px; height: 3px; border-radius: 2px; background: #4cc2ff; }
.tray { display: flex; align-items: center; justify-content: flex-end; padding-right: 21px; }
.cloud { margin: 0 16px 0 18px; }
.status { gap: 8px; }
.clock { width: 68px; align-items: flex-end; margin: 0 6px 0 8px; white-space: nowrap; }
```
